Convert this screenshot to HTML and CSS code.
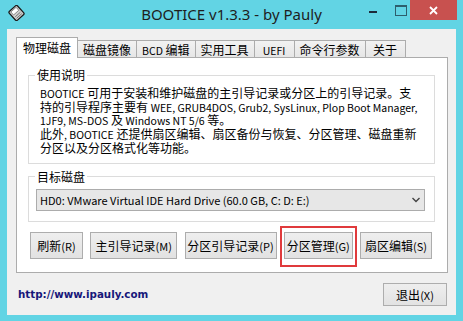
FILE: index.html
```html
<!DOCTYPE html>
<html lang="zh-CN">
<head>
  <meta charset="UTF-8">
  <meta name="viewport" content="width=device-width, initial-scale=1.0">
  <title>BOOTICE v1.3.3 - by Pauly</title>
  <link rel="stylesheet" href="styles.css">
</head>
<body>
  <div id="window">
    <div id="titlebar">
      <div class="app-icon">
        <svg width="17" height="16" viewBox="0 0 17 16">
          <g transform="rotate(-42 8.5 8)">
            <rect x="3" y="2" width="11" height="12" rx="1.5" fill="#cfcfcf" stroke="#1b1b1b" stroke-width="1.3"/>
            <rect x="5" y="3.5" width="7" height="4" fill="#ffffff" stroke="#555" stroke-width="0.6"/>
            <line x1="5" y1="10" x2="12" y2="10" stroke="#666" stroke-width="0.8"/>
            <line x1="5" y1="12" x2="12" y2="12" stroke="#666" stroke-width="0.8"/>
          </g>
        </svg>
      </div>
      <div class="title">BOOTICE v1.3.3 - by Pauly</div>
      <div class="caption-btns">
        <span class="cap cap-min"></span>
        <span class="cap cap-max"></span>
        <span class="cap cap-close">
          <svg width="9" height="9" viewBox="0 0 9 9">
            <path d="M1 1 L8 8 M8 1 L1 8" stroke="#fff" stroke-width="1.8"/>
          </svg>
        </span>
      </div>
    </div>

    <div id="client">
      <div class="tabs">
        <div class="tab active">物理磁盘</div>
        <div class="tab">磁盘镜像</div>
        <div class="tab"><span class="en">BCD</span> 编辑</div>
        <div class="tab">实用工具</div>
        <div class="tab"><span class="en">UEFI</span></div>
        <div class="tab">命令行参数</div>
        <div class="tab">关于</div>
      </div>

      <div class="panel">
        <fieldset class="group">
          <legend>使用说明</legend>
          <p class="usage">
            <span class="en">BOOTICE</span> 可用于安装和维护磁盘的主引导记录或分区上的引导记录。支<br>
            持的引导程序主要有 <span class="en">WEE, GRUB4DOS, Grub2, SysLinux, Plop Boot Manager,</span><br>
            <span class="en">1JF9, MS-DOS</span> 及 <span class="en">Windows NT 5/6</span> 等。<br>
            此外<span class="en">, BOOTICE</span> 还提供扇区编辑、扇区备份与恢复、分区管理、磁盘重新<br>
            分区以及分区格式化等功能。
          </p>
        </fieldset>

        <fieldset class="group group-disk">
          <legend>目标磁盘</legend>
          <div class="combo">
            <span class="en">HD0: VMware Virtual IDE Hard Drive (60.0 GB, C: D: E:)</span>
            <svg width="8" height="6" viewBox="0 0 8 6">
              <path d="M0.5 1 L4 4.5 L7.5 1" fill="none" stroke="#444" stroke-width="1.4"/>
            </svg>
          </div>
        </fieldset>

        <div class="actions">
          <button>刷新<span class="en">(R)</span></button>
          <button>主引导记录<span class="en">(M)</span></button>
          <button>分区引导记录<span class="en">(P)</span></button>
          <button class="marked">分区管理<span class="en">(G)</span></button>
          <button>扇区编辑<span class="en">(S)</span></button>
        </div>
      </div>

      <div class="footer">
        <a class="site">http://www.ipauly.com</a>
        <button class="btn-exit">退出<span class="en">(X)</span></button>
      </div>
    </div>
  </div>
</body>
</html>
```

FILE: styles.css
```css
* {
  box-sizing: border-box;
}

:root {
  --frame: #62d4e4;
  --client-bg: #f0f0f0;
  --tab-border: #acacac;
  --group-border: #dcdcdc;
  --btn-border: #adadad;
  --close-red: #c8514f;
}

html, body {
  margin: 0;
  height: 100%;
  overflow: hidden;
  background: var(--frame);
}

#window {
  width: 463px;
  height: 321px;
  display: flex;
  flex-direction: column;
  font-family: "Noto Sans CJK SC", sans-serif;
  font-size: 12px;
  color: #000;
}

/* latin runs are set a bit smaller, like Segoe UI next to YaHei */
.en {
  font-size: 10.5px;
}

/* title bar */

#titlebar {
  height: 29px;
  display: grid;
  grid-template-columns: 1fr auto 1fr;
  align-items: start;
}

.app-icon {
  padding: 5px 0 0 8px;
  line-height: 0;
}

.title {
  font-family: "Noto Sans", sans-serif;
  font-size: 15px;
  line-height: 20px;
  padding-top: 4px;
  color: #1e1e1e;
}

.caption-btns {
  justify-self: end;
  display: flex;
  margin-right: 6px;
}

.cap {
  height: 20px;
  display: flex;
}

.cap-min {
  width: 26px;
  padding: 11px 0 0 8px;
}

.cap-min::before {
  content: "";
  width: 8px;
  height: 2px;
  background: #1c2b3a;
}

.cap-max {
  width: 23px;
  padding: 5px 0 0 8px;
}

.cap-max::before {
  content: "";
  width: 10px;
  height: 8px;
  border: 1px solid #2d5e6c;
  border-top-width: 2px;
}

.cap-close {
  width: 47px;
  background: var(--close-red);
  align-items: center;
  justify-content: center;
}

/* client area */

#client {
  flex: 1;
  margin: 0 7px 6px;
  background: var(--client-bg);
  padding: 8px 8px 0 9px;
  display: flex;
  flex-direction: column;
}

.tabs {
  display: flex;
  align-items: flex-end;
  height: 20px;
  position: relative;
  z-index: 1;
}

.tab {
  height: 17px;
  line-height: 17px;
  min-width: 40px;
  padding: 0 5px;
  text-align: center;
  border: 1px solid var(--tab-border);
  border-left: none;
  border-bottom: none;
  background: linear-gradient(#f2f2f2, #e6e6e6);
  white-space: nowrap;
}

.tab.active {
  height: 21px;
  line-height: 19px;
  padding: 0 6px;
  border-left: 1px solid var(--tab-border);
  background: #fff;
  margin-bottom: -1px;
}

.panel {
  background: #fff;
  border: 1px solid var(--tab-border);
  display: flex;
  flex-direction: column;
}

.group {
  margin: 9px 12px 0 11px;
  padding: 0 8px 8px 6px;
  border: 1px solid var(--group-border);
  min-width: 0;
}

.group legend {
  padding: 0 2px;
  line-height: 16px;
}

.usage {
  margin: 4px 0 0 5px;
  line-height: 12.7px;
  white-space: nowrap;
}

.group-disk {
  margin-top: 5px;
  padding: 4px 9px 10px 7px;
}

.group-disk legend {
  margin-left: -1px;
}

.combo {
  height: 22px;
  border: 1px solid var(--tab-border);
  background: #e7e7e7;
  display: flex;
  align-items: center;
  justify-content: space-between;
  padding: 0 3px 0 3px;
  white-space: nowrap;
}

.combo .en {
  font-size: 11px;
}

.combo svg {
  margin-right: 1px;
}

.actions {
  display: grid;
  grid-template-columns: 53px 87px 92px 69px 72px;
  justify-content: space-between;
  margin: 10px 15px 13px 13px;
}

button {
  font: inherit;
  color: #000;
  height: 27px;
  padding: 0;
  border: 1px solid var(--btn-border);
  background: linear-gradient(#eeeeee, #e2e2e2);
  white-space: nowrap;
}

button .en {
  font-size: 11px;
}

.marked {
  position: relative;
}

.marked::after {
  content: "";
  position: absolute;
  left: -5px;
  right: -5px;
  top: -7px;
  bottom: -9px;
  border: 2px solid #e03a3c;
}

.footer {
  flex: 1;
  display: flex;
  align-items: center;
  justify-content: space-between;
  padding: 1px 1px 0 2px;
}

.site {
  font-family: "DejaVu Sans", sans-serif;
  font-weight: bold;
  font-size: 10.3px;
  color: #17177a;
  text-decoration: none;
}

.btn-exit {
  width: 64px;
  height: 23px;
}
```
